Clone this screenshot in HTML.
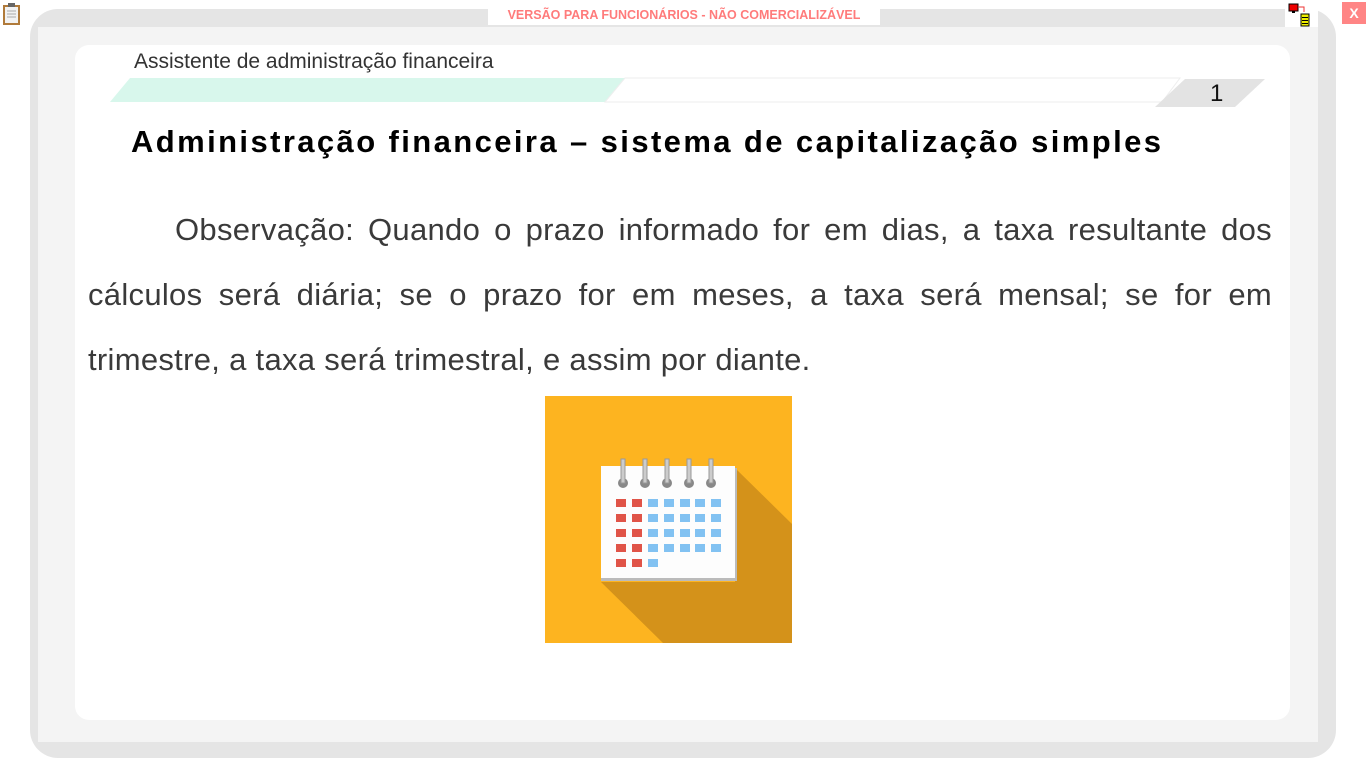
<!DOCTYPE html>
<html><head><meta charset="utf-8"><style>
body{margin:0;width:1366px;height:768px;background:#fff;position:relative;overflow:hidden;font-family:"Liberation Sans",sans-serif}
.abs{position:absolute}
#frame{left:30px;top:9px;width:1306px;height:749px;background:#e5e5e5;border-radius:28px}
#inner{left:38px;top:27px;width:1280px;height:715px;background:#f4f4f4}
#panel{left:75px;top:45px;width:1215px;height:675px;background:#fff;border-radius:14px}
#ver{left:488px;top:5px;width:392px;height:20px;background:#fff;color:#ff7b7b;font-size:12.5px;font-weight:bold;text-align:center;line-height:20px}
#x{left:1342px;top:2px;width:24px;height:22px;background:#ff8585;color:#fff;font-weight:bold;font-size:14px;text-align:center;line-height:22px}
#tr{left:1285px;top:0;width:33px;height:27px;background:#fff}
#sub{left:134px;top:50px;font-size:21px;color:#333;letter-spacing:0px}
#title{left:131px;top:124px;font-size:31px;font-weight:bold;color:#000;letter-spacing:2.4px}
#body{left:88px;top:197px;width:1184px;font-size:31px;line-height:65px;color:#3a3a3a;text-align:justify;text-indent:87px;letter-spacing:0.3px}
</style></head><body>
<div class="abs" id="frame"></div>
<div class="abs" id="inner"></div>
<div class="abs" id="panel"></div>
<div class="abs" id="tr"></div>
<div class="abs" id="ver">VERSÃO PARA FUNCIONÁRIOS - NÃO COMERCIALIZÁVEL</div>
<div class="abs" id="x">X</div>
<svg class="abs" style="left:0;top:0" width="26" height="28"><rect x="3" y="5" width="17" height="20" fill="#b07a3a"/><rect x="5" y="7" width="13" height="16" fill="#f2f2f2"/><rect x="8" y="3" width="7" height="4" fill="#666"/><g stroke="#aaa"><line x1="7" y1="11" x2="16" y2="11"/><line x1="7" y1="14" x2="16" y2="14"/><line x1="7" y1="17" x2="16" y2="17"/></g></svg>
<svg class="abs" style="left:1287px;top:2px" width="30" height="26"><rect x="2" y="2" width="9" height="7" fill="#e00" stroke="#000"/><rect x="5" y="9" width="3" height="2" fill="#000"/><path d="M11 5H17V10" stroke="#e33" fill="none"/><rect x="14" y="12" width="8" height="12" fill="#ee0" stroke="#000"/><g stroke="#000"><line x1="15" y1="15.5" x2="21" y2="15.5"/><line x1="15" y1="18.5" x2="21" y2="18.5"/><line x1="15" y1="21.5" x2="21" y2="21.5"/></g></svg>
<svg class="abs" style="left:100px;top:76px" width="1180" height="34">
<polygon points="10,26 30,2 525,2 505,26" fill="#d8f7ec"/>
<polygon points="505,26 525,2 1080,2 1062,26" fill="#fff" stroke="#eee"/>
<polygon points="1055,31 1085,3 1165,3 1135,31" fill="#e3e3e3"/>
<text x="1110" y="25" font-size="24" font-family="Liberation Sans" fill="#111">1</text>
</svg>
<div class="abs" id="sub">Assistente de administração financeira</div>
<div class="abs" id="title">Administração financeira – sistema de capitalização simples</div>
<div class="abs" id="body">Observação: Quando o prazo informado for em dias, a taxa resultante dos cálculos será diária; se o prazo for em meses, a taxa será mensal; se for em trimestre, a taxa será trimestral, e assim por diante.</div>
<svg class="abs" style="left:545px;top:396px" width="247" height="247">
<rect width="247" height="247" fill="#fdb420"/>
<polygon points="190,72 247,128 247,247 118,247 56,186 190,186" fill="#d4921a"/>
<rect x="56" y="70" width="134" height="114" fill="#fdfdfd"/>
<rect x="56" y="182" width="136" height="3" fill="#bbb"/><rect x="190" y="72" width="2" height="113" fill="#bbb"/>
<g fill="#888"><circle cx="78" cy="87" r="5"/><circle cx="100" cy="87" r="5"/><circle cx="122" cy="87" r="5"/><circle cx="144" cy="87" r="5"/><circle cx="166" cy="87" r="5"/></g>
<g fill="#ccc" stroke="#999" stroke-width="1"><rect x="76" y="63" width="4" height="24"/><rect x="98" y="63" width="4" height="24"/><rect x="120" y="63" width="4" height="24"/><rect x="142" y="63" width="4" height="24"/><rect x="164" y="63" width="4" height="24"/></g>
<g fill="#e05448"><rect x="71" y="103" width="10" height="8"/><rect x="87" y="103" width="10" height="8"/><rect x="71" y="118" width="10" height="8"/><rect x="87" y="118" width="10" height="8"/><rect x="71" y="133" width="10" height="8"/><rect x="87" y="133" width="10" height="8"/><rect x="71" y="148" width="10" height="8"/><rect x="87" y="148" width="10" height="8"/><rect x="71" y="163" width="10" height="8"/><rect x="87" y="163" width="10" height="8"/></g>
<g fill="#82c2f2"><rect x="103" y="103" width="10" height="8"/><rect x="119" y="103" width="10" height="8"/><rect x="135" y="103" width="10" height="8"/><rect x="150" y="103" width="10" height="8"/><rect x="166" y="103" width="10" height="8"/>
<rect x="103" y="118" width="10" height="8"/><rect x="119" y="118" width="10" height="8"/><rect x="135" y="118" width="10" height="8"/><rect x="150" y="118" width="10" height="8"/><rect x="166" y="118" width="10" height="8"/>
<rect x="103" y="133" width="10" height="8"/><rect x="119" y="133" width="10" height="8"/><rect x="135" y="133" width="10" height="8"/><rect x="150" y="133" width="10" height="8"/><rect x="166" y="133" width="10" height="8"/>
<rect x="103" y="148" width="10" height="8"/><rect x="119" y="148" width="10" height="8"/><rect x="135" y="148" width="10" height="8"/><rect x="150" y="148" width="10" height="8"/><rect x="166" y="148" width="10" height="8"/>
<rect x="103" y="163" width="10" height="8"/></g>
</svg>
</body></html>
